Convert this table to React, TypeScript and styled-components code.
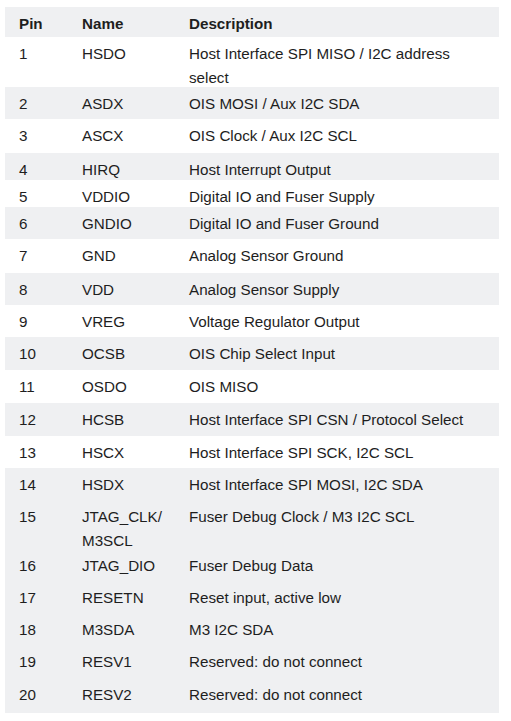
import styled, { createGlobalStyle } from "styled-components";

const GlobalStyle = createGlobalStyle`
  body {
    margin: 0;
    background: #ffffff;
    font-family: "Liberation Sans", Arial, sans-serif;
    color: #1e1e1e;
  }
`;

const Page = styled.div`
  padding: 7px 12px 8px 5px;
`;

const Table = styled.div`
  width: 494px;
  display: flex;
  flex-direction: column;
`;

const Row = styled.div<{ $shade: boolean; $h: number }>`
  display: grid;
  grid-template-columns: 63px 107px 1fr;
  height: ${(p) => p.$h}px;
  padding: 5px 10px 0 14px;
  box-sizing: border-box;
  background: ${(p) => (p.$shade ? "#eff0f2" : "#ffffff")};
  font-size: 15.2px;
  line-height: 24px;
`;

const HeaderRow = styled(Row)`
  padding-top: 5px;
  font-weight: bold;
`;

const Cell = styled.div`
  white-space: pre-line;
`;

type Pin = {
  pin: number;
  name: string;
  desc: string;
  h: number;
  shade: boolean;
};

const pins: Pin[] = [
  { pin: 1, name: "HSDO", desc: "Host Interface SPI MISO / I2C address\nselect", h: 50, shade: false },
  { pin: 2, name: "ASDX", desc: "OIS MOSI / Aux I2C SDA", h: 32, shade: true },
  { pin: 3, name: "ASCX", desc: "OIS Clock / Aux I2C SCL", h: 34, shade: false },
  { pin: 4, name: "HIRQ", desc: "Host Interrupt Output", h: 27, shade: true },
  { pin: 5, name: "VDDIO", desc: "Digital IO and Fuser Supply", h: 27, shade: false },
  { pin: 6, name: "GNDIO", desc: "Digital IO and Fuser Ground", h: 32, shade: true },
  { pin: 7, name: "GND", desc: "Analog Sensor Ground", h: 34, shade: false },
  { pin: 8, name: "VDD", desc: "Analog Sensor Supply", h: 32, shade: true },
  { pin: 9, name: "VREG", desc: "Voltage Regulator Output", h: 32, shade: false },
  { pin: 10, name: "OCSB", desc: "OIS Chip Select Input", h: 33, shade: true },
  { pin: 11, name: "OSDO", desc: "OIS MISO", h: 33, shade: false },
  { pin: 12, name: "HCSB", desc: "Host Interface SPI CSN / Protocol Select", h: 33, shade: true },
  { pin: 13, name: "HSCX", desc: "Host Interface SPI SCK, I2C SCL", h: 32, shade: false },
  { pin: 14, name: "HSDX", desc: "Host Interface SPI MOSI, I2C SDA", h: 32, shade: true },
  { pin: 15, name: "JTAG_CLK/\nM3SCL", desc: "Fuser Debug Clock / M3 I2C SCL", h: 49, shade: true },
  { pin: 16, name: "JTAG_DIO", desc: "Fuser Debug Data", h: 32, shade: true },
  { pin: 17, name: "RESETN", desc: "Reset input, active low", h: 32, shade: true },
  { pin: 18, name: "M3SDA", desc: "M3 I2C SDA", h: 32, shade: true },
  { pin: 19, name: "RESV1", desc: "Reserved: do not connect", h: 33, shade: true },
  { pin: 20, name: "RESV2", desc: "Reserved: do not connect", h: 35, shade: true },
];

export default function App() {
  return (
    <Page>
      <GlobalStyle />
      <Table>
        <HeaderRow $shade={true} $h={30}>
          <Cell>Pin</Cell>
          <Cell>Name</Cell>
          <Cell>Description</Cell>
        </HeaderRow>
        {pins.map((p) => (
          <Row key={p.pin} $shade={p.shade} $h={p.h}>
            <Cell>{p.pin}</Cell>
            <Cell>{p.name}</Cell>
            <Cell>{p.desc}</Cell>
          </Row>
        ))}
      </Table>
    </Page>
  );
}
